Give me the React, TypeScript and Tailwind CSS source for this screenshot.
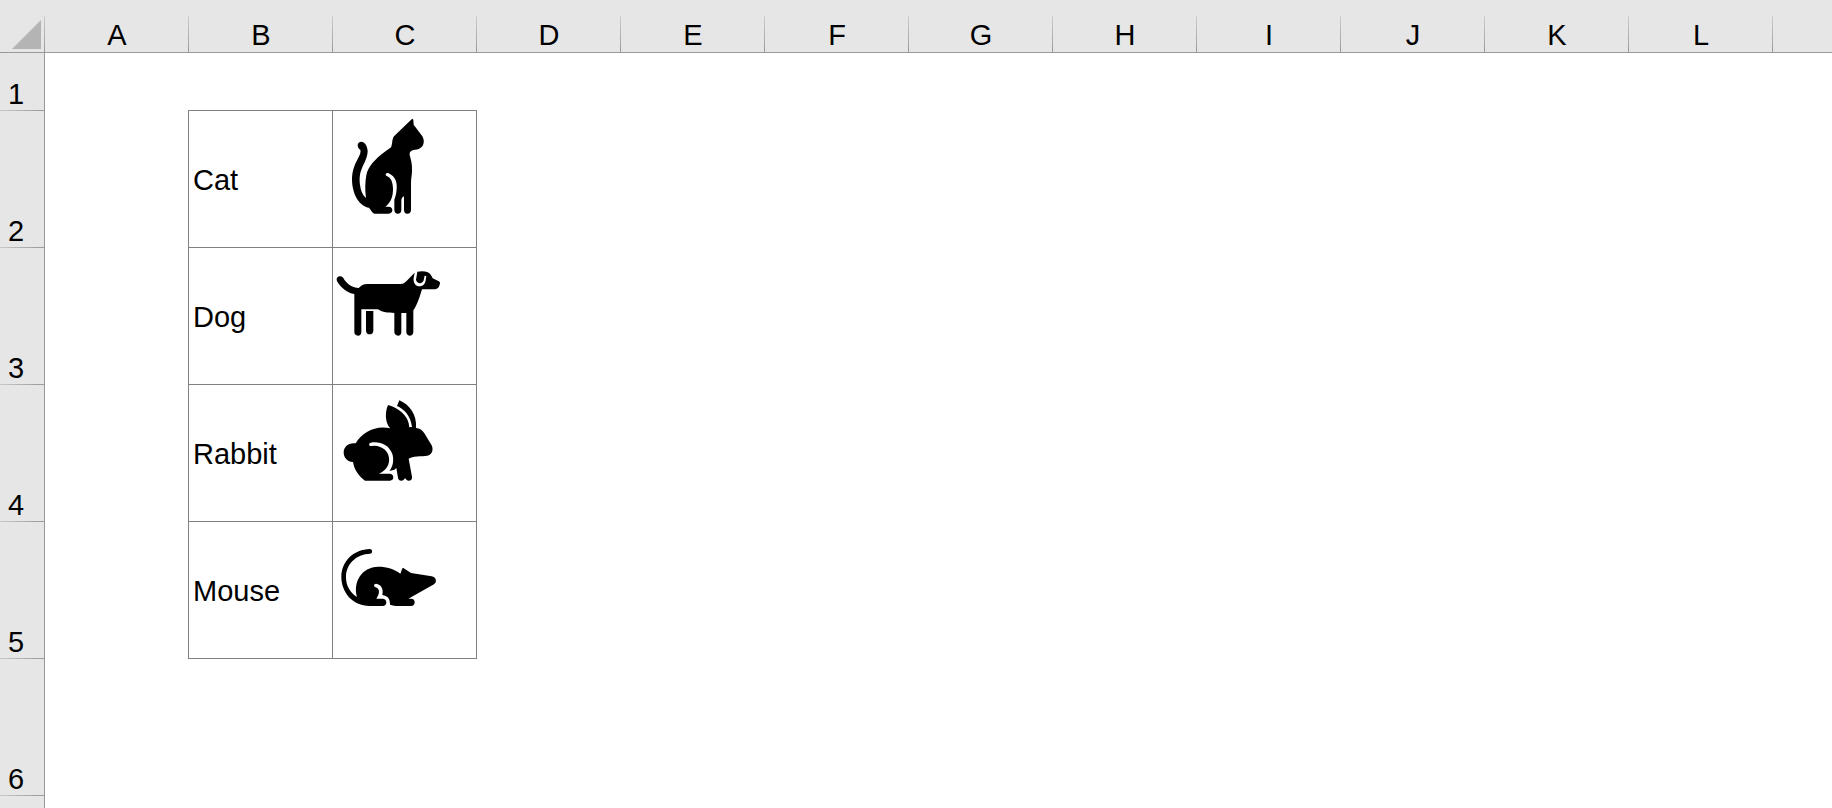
import type { ReactNode } from "react";

const columns = ["A", "B", "C", "D", "E", "F", "G", "H", "I", "J", "K", "L"];

function Cat() {
  return (
    <svg viewBox="9 9 429 408" className="block h-[136px] w-[143px]" role="img" aria-label="Cat">
      <path d="M245 34 Q249 31 250 36 L251 50 L276 83 C284 96 283 109 274 118 C266 126 257 125 248 127 C241 129 238 134 239 141 C243 155 247 170 246 188 C246 200 243 210 243 224 L243 305 C243 313 239 317 232 317 C225 317 222 312 222 305 L222 265 C218 267 215 270 214 276 L214 305 C214 313 210 317 203 317 C197 317 193 312 193 305 L193 275 C199 260 201 244 200 230 C198 213 190 203 176 196 C170 193 163 200 170 204 C183 208 189 224 189 243 C189 264 184 283 166 296 L176 296 C183 296 187 300 187 306 C187 312 183 317 176 317 L133 317 C126 314 123 305 117 299 C90 295 67 262 66 215 C66 185 76 166 85 149 C90 140 93 132 91 125 C86 123 83 117 83 111 C84 104 89 101 94 101 C106 102 113 117 113 130 C112 150 103 164 97 178 C88 198 88 215 90 230 C92 246 97 261 108 270 C105 248 105 223 109 202 C114 177 130 160 152 141 C164 131 174 125 183 118 C188 108 185 95 192 85 Z" />
    </svg>
  );
}

function Dog() {
  return (
    <svg viewBox="9 9 429 408" className="block h-[136px] w-[143px]" role="img" aria-label="Dog">
      <path d="M30 94 C37 94 40 98 43 104 C52 117 68 128 86 129 C92 122 101 117 112 117 L213 117 C219 117 224 114 229 109 L254 83 L251 98 C249 114 257 124 268 124 C280 124 286 116 287 106 L289 93 L284 92 L281 106 C278 118 260 117 258 104 L262 80 Q282 77 293 82 C301 86 304 92 308 100 L325 108 Q331 110 330 115 C328 126 324 133 313 133 L276 133 C271 149 262 181 250 196 L250 261 C250 268 245 272 239 272 C233 272 229 267 229 261 L229 204 L214 204 L214 261 C214 268 210 272 204 272 C198 272 193 267 193 261 L193 204 C174 203 158 203 144 193 L94 193 L94 261 C94 268 90 272 84 272 C77 272 73 267 73 261 L73 147 C51 143 34 129 22 110 C17 102 22 94 30 94 Z" />
      <path d="M108 198 H130 V257 C130 264 125 268 119 268 C113 268 108 264 108 257 Z" />
    </svg>
  );
}

function Rabbit() {
  return (
    <svg viewBox="9 6 429 408" className="block h-[136px] w-[143px]" role="img" aria-label="Rabbit">
      <path d="M174 66 C205 75 236 96 238 133 L246 132 C242 98 222 78 201 69 L208 52 C239 66 261 94 258 135 C269 136 277 141 284 152 L304 185 C310 195 309 209 298 216 C284 223 258 216 236 227 L246 281 C247 289 243 293 236 293 C231 293 228 289 225 285 C223 289 220 293 214 293 C208 293 205 289 204 284 L199 255 L193 260 L178 264 C190 250 192 229 187 213 C178 188 155 176 128 178 L122 179 C116 181 116 189 123 189 L135 188 C154 190 168 199 174 213 C183 236 174 261 147 272 L179 272 C185 272 190 276 190 283 C190 289 186 293 180 293 L105 293 C85 278 73 260 69 237 C52 237 41 224 41 208 C41 190 57 178 77 181 C96 147 139 125 181 136 C167 123 163 91 174 66 Z" />
    </svg>
  );
}

function Mouse() {
  return (
    <svg viewBox="9 6 429 408" className="block h-[136px] w-[143px]" role="img" aria-label="Mouse">
      <path d="M120 87 C128 87 129 101 120 101 C79 102 48 132 48 171 C48 197 60 218 81 231 C69 186 94 141 145 140 C171 140 193 147 211 161 C214 155 214 148 219 143 L243 159 L305 169 C319 172 322 186 312 193 L235 236 L244 236 C250 236 254 240 254 247 C254 254 250 258 243 258 L216 258 C204 258 191 258 180 254 C180 237 175 228 157 225 C161 206 154 194 138 191 C131 191 130 200 137 202 C151 206 149 222 139 236 L158 236 C164 236 169 240 169 247 C169 254 165 258 158 258 L119 258 C67 258 34 216 34 171 C34 123 72 88 120 87 Z" />
    </svg>
  );
}

const animals: { name: string; icon: ReactNode }[] = [
  { name: "Cat", icon: <Cat /> },
  { name: "Dog", icon: <Dog /> },
  { name: "Rabbit", icon: <Rabbit /> },
  { name: "Mouse", icon: <Mouse /> },
];

function RowHeader({ n }: { n?: number }) {
  return (
    <th
      scope="row"
      className="border-r border-[#999] bg-[#e6e6e6] bg-[linear-gradient(to_right,#c8c8c8,#999)] bg-[length:100%_1px] bg-bottom bg-no-repeat pl-2 text-left align-bottom font-normal leading-[34px]"
    >
      {n}
    </th>
  );
}

function EmptyCells({ count }: { count: number }) {
  return Array.from({ length: count }, (_, i) => <td key={i} />);
}

export default function App() {
  return (
    <main className="h-screen overflow-hidden bg-white font-['Liberation_Sans',Arial,sans-serif] text-[29px] text-black">
      <table className="w-full table-fixed border-separate border-spacing-0">
        <colgroup>
          <col className="w-[45px]" />
          {columns.map((c) => (
            <col key={c} className="w-36" />
          ))}
          <col />
        </colgroup>
        <thead>
          <tr className="h-[53px] bg-[#e6e6e6]">
            <td className="border-b border-[#999] bg-[linear-gradient(to_bottom,#ccc,#999)] bg-[length:1px_36px] bg-right-bottom bg-no-repeat p-0 align-bottom">
              <button type="button" aria-label="Select all" className="mb-[3px] ml-3 block">
                <svg viewBox="0 0 29 29" className="block size-[29px]" fill="#b4b4b4">
                  <path d="M29 0V29H0Z" />
                </svg>
              </button>
            </td>
            {columns.map((c) => (
              <th
                key={c}
                scope="col"
                className="border-b border-[#999] bg-[linear-gradient(to_bottom,#ccc,#999)] bg-[length:1px_36px] bg-right-bottom bg-no-repeat p-0 text-center align-bottom font-normal leading-[34px]"
              >
                {c}
              </th>
            ))}
            <td className="border-b border-[#999]" />
          </tr>
        </thead>
        <tbody>
          <tr className="h-[58px]">
            <RowHeader n={1} />
            <td className="bg-[linear-gradient(#808080,#808080)] bg-[length:1px_1px] bg-right-bottom bg-no-repeat" />
            <td className="border-b border-[#808080]" />
            <td className="border-b border-[#808080]" />
            <EmptyCells count={10} />
          </tr>
          {animals.map((a, i) => (
            <tr key={a.name} className="h-[137px]">
              <RowHeader n={i + 2} />
              <td className="border-r border-[#808080]" />
              <td className="border-r border-b border-[#808080] pt-0.5 pr-0 pb-0 pl-1 align-middle leading-8">{a.name}</td>
              <td className="border-r border-b border-[#808080] p-0 align-top">{a.icon}</td>
              <EmptyCells count={10} />
            </tr>
          ))}
          <tr className="h-[137px]">
            <RowHeader n={6} />
            <EmptyCells count={13} />
          </tr>
          <tr className="h-[137px]">
            <RowHeader />
            <EmptyCells count={13} />
          </tr>
        </tbody>
      </table>
    </main>
  );
}
